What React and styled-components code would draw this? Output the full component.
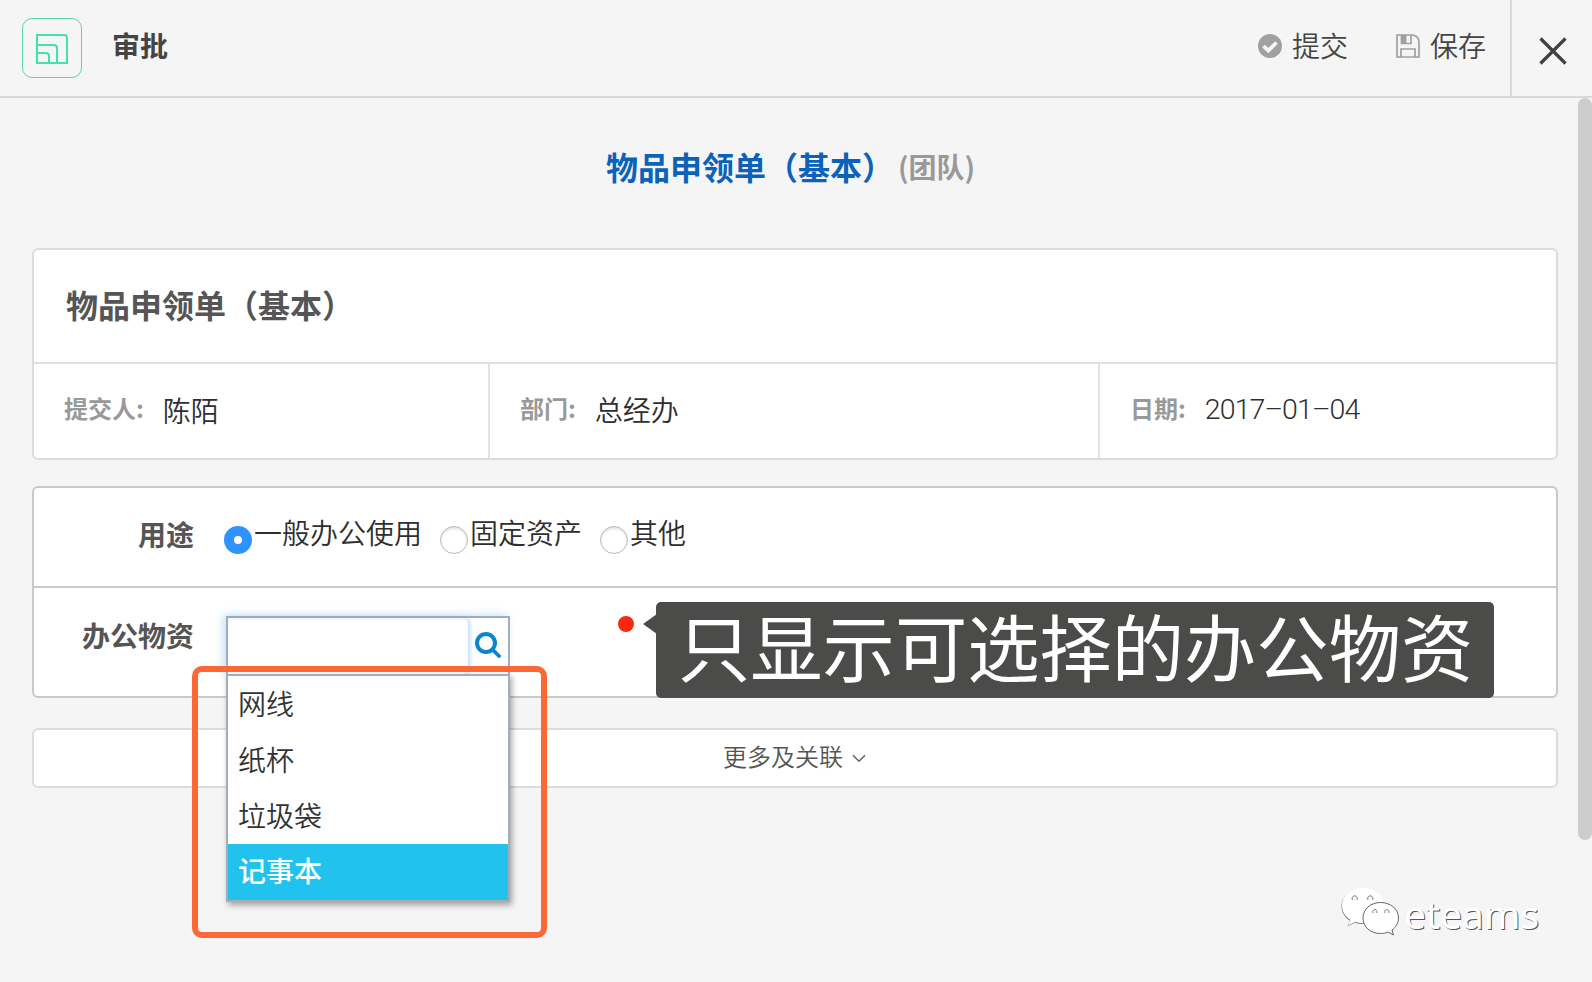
import React from "react";
import styled, { createGlobalStyle } from "styled-components";

const supplies = ["网线", "纸杯", "垃圾袋", "记事本"];

const purposes = [
  { label: "一般办公使用", checked: true },
  { label: "固定资产", checked: false },
  { label: "其他", checked: false },
];

const ApprovalLogo = () => (
  <LogoBox>
    <svg width="32" height="30" viewBox="0 0 32 30" fill="none" stroke="#42e2ad" strokeWidth="2">
      <path d="M1 1H28Q31 1 31 4V29H1Z" />
      <path d="M1 11H18Q21 11 21 14V29" />
      <path d="M1 19H10Q13 19 13 22V29" />
    </svg>
  </LogoBox>
);

const CheckIcon = () => (
  <svg width="24" height="24" viewBox="0 0 24 24">
    <circle cx="12" cy="12" r="12" fill="#a0a0a0" />
    <path d="M5.5 12L10.3 16.7L18.5 8.5" fill="none" stroke="#f5f5f5" strokeWidth="3.8" />
  </svg>
);

const SaveIcon = () => (
  <svg width="24" height="24" viewBox="0 0 24 24" fill="none" stroke="#a0a0a0" strokeWidth="1.7">
    <path d="M1 1H17Q23 2.5 23 8V23H1Z" />
    <path d="M5.5 1V9.5H15V1" />
    <path d="M5 23V15H19V23" />
    <path d="M8 1V9" strokeWidth="5" />
  </svg>
);

const CloseIcon = () => (
  <svg width="28" height="28" viewBox="0 0 28 28" stroke="#404040" strokeWidth="3.2">
    <path d="M1.5 1.5L26.5 26.5M26.5 1.5L1.5 26.5" />
  </svg>
);

const SearchIcon = () => (
  <svg width="26" height="26" viewBox="0 0 26 26" fill="none" stroke="#0a86cc">
    <circle cx="11" cy="11" r="9" strokeWidth="4" />
    <path d="M18 18L24 24" strokeWidth="3.8" strokeLinecap="round" />
  </svg>
);

const ChevronIcon = () => (
  <svg width="14" height="9" viewBox="0 0 14 9" fill="none" stroke="#666" strokeWidth="1.6">
    <path d="M1 1.2L7 7.2L13 1.2" />
  </svg>
);

const WechatIcon = () => (
  <svg width="60" height="52" viewBox="0 0 60 52">
    <path
      d="M22 2C10 2 1 9.5 1 19.5C1 26 4.5 31 9.5 34L7 39.5L14 36C17 37 20 37 23 37C34 36 43 29 43 19.5C43 9.5 34 2 22 2Z"
      fill="#666"
      transform="translate(-0.4 0.8)"
    />
    <path
      d="M22 2C10 2 1 9.5 1 19.5C1 26 4.5 31 9.5 34L7 39.5L14 36C17 37 20 37 23 37C34 36 43 29 43 19.5C43 9.5 34 2 22 2Z"
      fill="#fff"
    />
    <path
      d="M39.5 16.5C29.5 16.5 22 23 22 32C22 41 29.5 47.5 39.5 47.5C42.5 47.5 45 47 47 46L52.5 49L51 44C55 41 57.5 37 57.5 32C57.5 23 49.5 16.5 39.5 16.5Z"
      fill="#fff"
      stroke="#666"
      strokeWidth="1"
    />
    <g fill="#f5f5f5" stroke="#777" strokeWidth="0.9">
      <path d="M11.5 14A2.7 2.7 0 1 1 16 14" />
      <path d="M27 14A2.7 2.7 0 1 1 31.5 14" />
      <path d="M32 27A2.2 2.2 0 1 1 35.7 27" />
      <path d="M44 27A2.2 2.2 0 1 1 47.7 27" />
    </g>
  </svg>
);

const App = () => {
  return (
    <Page>
      <GlobalStyle />
      <Header>
        <ApprovalLogo />
        <HeaderTitle>审批</HeaderTitle>
        <Actions>
          <Action>
            <CheckIcon />
            <span>提交</span>
          </Action>
          <Action>
            <SaveIcon />
            <span>保存</span>
          </Action>
        </Actions>
        <CloseButton>
          <CloseIcon />
        </CloseButton>
      </Header>

      <Content>
        <FormTitle>
          物品申领单（基本）<Team>(团队)</Team>
        </FormTitle>

        <InfoCard>
          <InfoTitle>物品申领单（基本）</InfoTitle>
          <InfoRow>
            <InfoCell>
              <InfoLabel>提交人:</InfoLabel>
              <InfoValue $drop={1}>陈陌</InfoValue>
            </InfoCell>
            <InfoCell>
              <InfoLabel>部门:</InfoLabel>
              <InfoValue>总经办</InfoValue>
            </InfoCell>
            <InfoCell>
              <InfoLabel>日期:</InfoLabel>
              <DateValue>2017–01–04</DateValue>
            </InfoCell>
          </InfoRow>
        </InfoCard>

        <FieldCard>
          <PurposeRow>
            <FieldLabel>用途</FieldLabel>
            <RadioGroup>
              {purposes.map(({ label, checked }) => (
                <RadioItem key={label}>
                  <Radio $checked={checked} />
                  <span>{label}</span>
                </RadioItem>
              ))}
            </RadioGroup>
          </PurposeRow>
          <SupplyRow>
            <FieldLabel>办公物资</FieldLabel>
            <SearchBox>
              <SearchInput />
              <SearchButton>
                <SearchIcon />
              </SearchButton>
              <Menu>
                {supplies.map((name, i) => (
                  <MenuItem key={name} $active={i === supplies.length - 1}>
                    {name}
                  </MenuItem>
                ))}
              </Menu>
              <Highlight />
            </SearchBox>
            <Dot />
            <Callout>只显示可选择的办公物资</Callout>
          </SupplyRow>
        </FieldCard>

        <MoreBar>
          <span>更多及关联</span>
          <ChevronIcon />
        </MoreBar>
      </Content>

      <ScrollThumb />
      <Watermark>
        <WechatIcon />
        <span>eteams</span>
      </Watermark>
    </Page>
  );
};

export default App;

const GlobalStyle = createGlobalStyle`
  * {
    box-sizing: border-box;
  }

  body {
    margin: 0;
    overflow: hidden;
    background: #f5f5f5;
  }
`;

const Page = styled.div`
  position: relative;
  width: 1592px;
  height: 982px;
  overflow: hidden;
  background: #f5f5f5;
  color: #2e2e2e;
  font-family: "Noto Sans CJK SC", sans-serif;
  font-size: 28px;
  font-weight: 350;
  line-height: 40px;
  white-space: nowrap;

  svg {
    display: block;
    flex-shrink: 0;
  }
`;

const Header = styled.header`
  display: flex;
  align-items: flex-start;
  height: 98px;
  padding-left: 22px;
  border-bottom: 2px solid #dadada;
`;

const LogoBox = styled.div`
  display: flex;
  align-items: center;
  justify-content: center;
  width: 60px;
  height: 60px;
  margin-top: 18px;
  padding-top: 2px;
  border: 1px solid #5fd3ac;
  border-radius: 10px;
`;

const HeaderTitle = styled.h1`
  margin: 25px 0 0 30px;
  font-size: 28px;
  font-weight: 700;
  color: #444;
`;

const Actions = styled.div`
  display: flex;
  gap: 48px;
  margin: 25px 24px 0 auto;
`;

const Action = styled.div`
  display: flex;
  gap: 10px;
  color: #444;

  svg {
    margin-top: 9px;
  }
`;

const CloseButton = styled.div`
  display: flex;
  justify-content: center;
  width: 82px;
  height: 96px;
  padding: 37px 0 0 2px;
  border-left: 2px solid #dadada;
`;

const Content = styled.main`
  display: flex;
  flex-direction: column;
  padding: 0 34px 0 32px;
`;

const FormTitle = styled.h2`
  display: flex;
  align-items: center;
  height: 150px;
  margin: 0;
  padding: 0 0 14px 574px;
  font-size: 32px;
  font-weight: 700;
  color: #0b62b8;
`;

const Team = styled.span`
  margin-left: 4px;
  font-size: 28px;
  color: #999;
`;

const InfoCard = styled.section`
  height: 212px;
  border: 2px solid #dcdcdc;
  border-radius: 6px;
  background: #fff;
`;

const InfoTitle = styled.h3`
  height: 114px;
  margin: 0;
  padding: 34px 32px 0;
  border-bottom: 2px solid #dfdfdf;
  font-size: 32px;
  font-weight: 700;
  line-height: 40px;
  color: #555;
`;

const InfoRow = styled.div`
  display: grid;
  grid-template-columns: 454px 610px 1fr;
  height: 94px;
`;

const InfoCell = styled.div`
  display: flex;
  padding: 25px 0 0 30px;

  & + & {
    border-left: 2px solid #e2e2e2;
  }
`;

const InfoLabel = styled.span`
  margin: -1px 19px 0 0;
  font-size: 24px;
  font-weight: 700;
  color: #999;
`;

const InfoValue = styled.span`
  padding-top: ${({ $drop = 0 }) => $drop}px;
`;

const DateValue = styled(InfoValue)`
  padding-top: 1px;
  font-family: Roboto, "Liberation Sans", sans-serif;
  font-size: 28.5px;
  font-weight: 350;
  letter-spacing: -0.9px;
`;

const FieldCard = styled.section`
  height: 212px;
  margin-top: 26px;
  border: 2px solid #c9c9c9;
  border-radius: 6px;
  background: #fff;
`;

const FieldRow = styled.div`
  display: flex;
`;

const PurposeRow = styled(FieldRow)`
  height: 100px;
  padding-top: 26px;
  border-bottom: 2px solid #c9c9c9;
`;

const SupplyRow = styled(FieldRow)`
  position: relative;
  height: 108px;
  padding-top: 27px;
`;

const FieldLabel = styled.label`
  width: 160px;
  text-align: right;
  font-weight: 700;
  color: #555;
`;

const RadioGroup = styled.div`
  display: flex;
  gap: 18px;
  margin: -2px 0 0 30px;
`;

const RadioItem = styled.div`
  display: flex;
  gap: 2px;
`;

const Radio = styled.i`
  width: 28px;
  height: 28px;
  margin-top: 14px;
  border: ${({ $checked }) => ($checked ? "10px solid #2f93ff" : "1.5px solid #b8b8b8")};
  border-radius: 50%;
  background: #fff;
  box-shadow: ${({ $checked }) => ($checked ? "none" : "inset 0 2px 2px #e4e4e4")};
`;

const SearchBox = styled.div`
  position: relative;
  display: flex;
  width: 284px;
  height: 60px;
  margin: 1px 0 0 32px;
  border: 2px solid #a3adba;
  background: #fff;
  box-shadow: -3px -1px 8px rgba(82, 168, 236, 0.35);
`;

const SearchInput = styled.div`
  width: 240px;
  border-radius: 0 6px 6px 0;
  box-shadow: inset 0 2px 2px #f0f7fc, 2px 0 4px rgba(82, 168, 236, 0.4);
`;

const SearchButton = styled.div`
  padding: 14px 0 0 7px;
`;

const Menu = styled.ul`
  position: absolute;
  top: 56px;
  left: -2px;
  width: 284px;
  margin: 0;
  padding: 0;
  list-style: none;
  border: 2px solid #a3adba;
  background: #fff;
  box-shadow: 2px 3px 6px rgba(0, 0, 0, 0.35);
`;

const MenuItem = styled.li`
  height: 56px;
  padding-left: 10px;
  line-height: ${({ $active }) => ($active ? 53 : 54)}px;
  font-weight: ${({ $active }) => ($active ? 500 : 350)};
  color: ${({ $active }) => ($active ? "#fff" : "#333")};
  background: ${({ $active }) => ($active ? "#21c2ed" : "#fff")};
`;

const Highlight = styled.div`
  position: absolute;
  top: 48px;
  left: -36px;
  width: 355px;
  height: 272px;
  border: 6px solid #fb6836;
  border-radius: 10px;
`;

const Dot = styled.i`
  position: absolute;
  top: 28px;
  left: 584px;
  width: 16px;
  height: 16px;
  border-radius: 50%;
  background: #fa2810;
`;

const Callout = styled.div`
  position: absolute;
  top: 14px;
  left: 622px;
  width: 838px;
  height: 96px;
  padding-left: 22px;
  border-radius: 5px;
  background: #4b4b49;
  color: #fff;
  font-size: 72.3px;
  font-weight: 400;
  line-height: 86px;

  &::before {
    content: "";
    position: absolute;
    top: 12px;
    left: -13px;
    border: 10px solid transparent;
    border-left: 0;
    border-right: 14px solid #4b4b49;
  }
`;

const MoreBar = styled.div`
  display: flex;
  justify-content: center;
  gap: 9px;
  height: 60px;
  margin-top: 30px;
  padding: 6px 1px 0 0;
  border: 2px solid #dcdcdc;
  border-radius: 6px;
  background: #fff;
  font-size: 24px;
  color: #555;

  svg {
    margin-top: 18px;
  }
`;

const ScrollThumb = styled.div`
  position: absolute;
  top: 98px;
  right: 0;
  width: 14px;
  height: 742px;
  border-radius: 7px;
  background: #cdcdcd;
`;

const Watermark = styled.div`
  position: absolute;
  top: 886px;
  left: 1341px;
  display: flex;
  gap: 3px;
  font-family: "Noto Sans", sans-serif;
  font-size: 39px;
  font-weight: 400;
  line-height: 56px;
  color: #fff;
  text-shadow: 1px 1px 0 #555;
`;
